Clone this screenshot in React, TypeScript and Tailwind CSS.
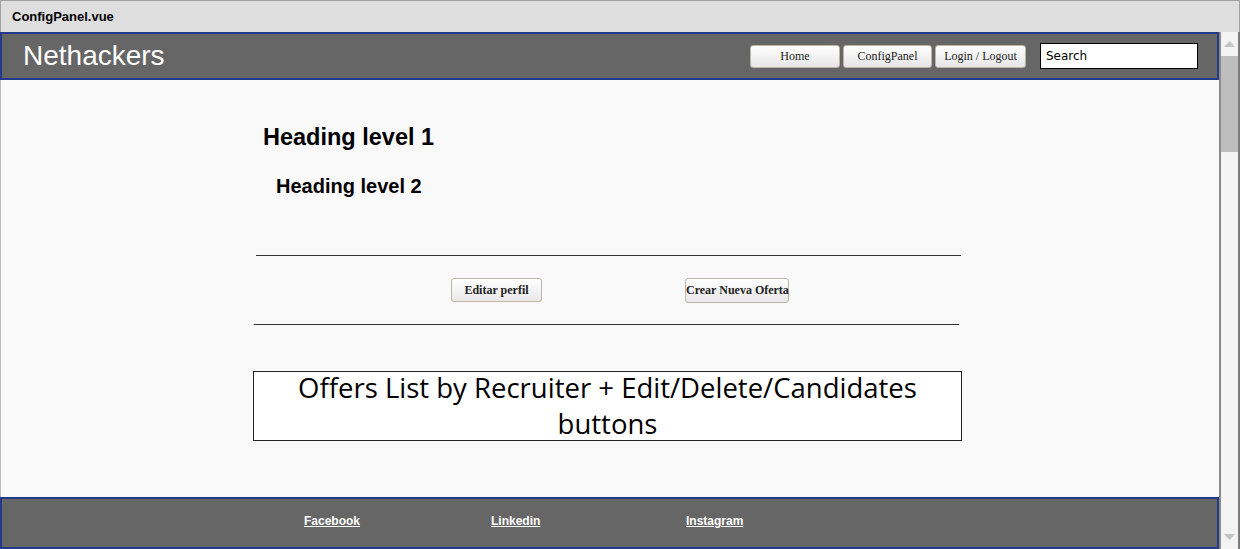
// ConfigPanel.tsx
export default function App() {
  const navButtons = ["Home", "ConfigPanel", "Login / Logout"];
  const navWidths = ["w-[90px]", "w-[89px]", "w-[91px]"];
  const footerLinks = [
    { label: "Facebook", width: "w-[187px]" },
    { label: "Linkedin", width: "w-[195px]" },
    { label: "Instagram", width: "w-[80px]" },
  ];

  return (
    <div className="w-[1240px] h-[549px] flex flex-col bg-[#f9f9f9] font-['Liberation_Sans',Arial,sans-serif] overflow-hidden">
      {/* window title */}
      <div className="h-[32px] shrink-0 flex items-center px-[11px] bg-[#dedede] border border-[#a0a0a0] border-b-0">
        <span className="text-[13px] font-bold text-black">ConfigPanel.vue</span>
      </div>

      <div className="flex flex-1 min-h-0 border-r-2 border-[#7a7a7a]">
        <div className="flex flex-col w-[1219px] shrink-0">
          {/* header */}
          <div className="h-[48px] shrink-0 flex items-center bg-[#666666] border-2 border-[#23398a] pl-[21px] pr-[19px]">
            <h1 className="text-[28px] text-white leading-none">Nethackers</h1>
            <div className="ml-auto flex items-center gap-[3px]">
              {navButtons.map((label, i) => (
                <button
                  key={label}
                  className={`${navWidths[i]} h-[23px] rounded-[3px] border border-[#bdb5a6] bg-gradient-to-b from-white to-[#e6e6e6] text-[12px] text-[#222] font-['Liberation_Serif',serif]`}
                >
                  {label}
                </button>
              ))}
              <div className="ml-[11px] w-[158px] h-[26px] bg-white border border-black flex items-center px-[5px]">
                <span className="text-[12px] text-black font-['DejaVu_Sans',sans-serif]">Search</span>
              </div>
            </div>
          </div>

          {/* main */}
          <div className="flex-1 min-h-0 border-l border-[#bbbbbb] pl-[252px]">
            <div className="w-[710px] flex flex-col">
              <h2 className="mt-[42px] ml-[10px] text-[23.5px] font-bold text-black leading-[30px]">
                Heading level 1
              </h2>
              <h3 className="mt-[21px] ml-[23px] text-[20px] font-bold text-black leading-[26px]">
                Heading level 2
              </h3>
              <div className="mt-[56px] ml-[3px] w-[705px] h-px bg-[#333]" />
              <div className="flex items-center h-[68px]">
                <button className="ml-[198px] w-[91px] h-[24px] rounded-[3px] border border-[#bdb5a6] bg-gradient-to-b from-white to-[#e8e8e8] text-[12px] font-bold text-[#222] font-['Liberation_Serif',serif]">
                  Editar perfil
                </button>
                <button className="ml-[143px] w-[104px] h-[25px] rounded-[3px] border border-[#bdb5a6] bg-gradient-to-b from-white to-[#e8e8e8] text-[12px] font-bold text-[#222] font-['Liberation_Serif',serif] whitespace-nowrap">
                  Crear Nueva Oferta
                </button>
              </div>
              <div className="ml-[1px] w-[705px] h-px bg-[#333]" />
              <div className="mt-[46px] ml-0 w-[709px] h-[70px] bg-white border border-[#222] flex items-center justify-center text-center">
                <p className="text-[27.5px] leading-[36px] text-black font-['Open_Sans',sans-serif] px-[20px]">
                  Offers List by Recruiter + Edit/Delete/Candidates buttons
                </p>
              </div>
            </div>
          </div>

          {/* footer */}
          <div className="h-[52px] shrink-0 flex items-center bg-[#666666] border-2 border-[#23398a] pl-[302px] pb-[6px]">
            {footerLinks.map((link) => (
              <div key={link.label} className={link.width}>
                <a href="#" className="text-[12px] font-bold text-white underline">
                  {link.label}
                </a>
              </div>
            ))}
          </div>
        </div>

        {/* scrollbar */}
        <div className="flex-1 flex flex-col bg-[#f3f3f3] border-l-2 border-[#8a8a8a]">
          <div className="h-[24px] flex items-center justify-center">
            <svg width="11" height="6" viewBox="0 0 11 6">
              <polygon points="0,6 5.5,0 11,6" fill="#c4c4c4" />
            </svg>
          </div>
          <div className="h-[96px] bg-[#bdbdbd]" />
          <div className="flex-1" />
          <div className="h-[24px] flex items-center justify-center">
            <svg width="11" height="6" viewBox="0 0 11 6">
              <polygon points="0,0 11,0 5.5,6" fill="#c4c4c4" />
            </svg>
          </div>
        </div>
      </div>
    </div>
  );
}
